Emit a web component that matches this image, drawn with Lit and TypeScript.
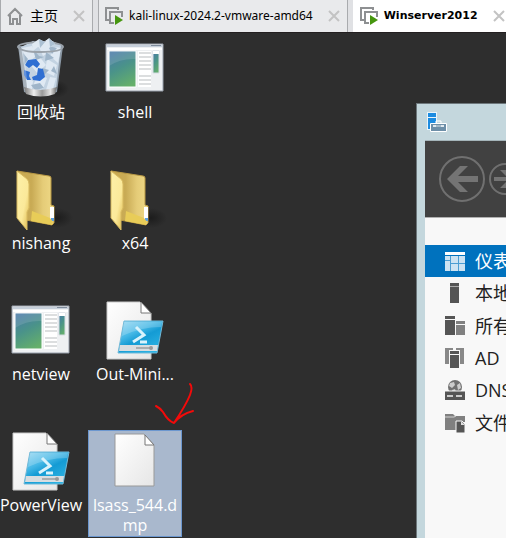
import { LitElement, html, svg, css } from "lit";
import { customElement, property } from "lit/decorators.js";
import { classMap } from "lit/directives/class-map.js";

const defs = svg`
  <defs>
    <linearGradient id="sheet" x1="0" y1="0" x2="1" y2="1">
      <stop offset="0" stop-color="#fff"/><stop offset="1" stop-color="#e6e6e6"/>
    </linearGradient>
    <linearGradient id="pane" x1="0.3" y1="0" x2="0.7" y2="1">
      <stop offset="0" stop-color="#4a7da6"/><stop offset="0.45" stop-color="#4a9389"/><stop offset="1" stop-color="#66b06a"/>
    </linearGradient>
    <linearGradient id="ps" x1="0" y1="0" x2="0.7" y2="1">
      <stop offset="0" stop-color="#9bd9f3"/><stop offset="0.4" stop-color="#45b8e6"/><stop offset="0.6" stop-color="#149bd4"/><stop offset="1" stop-color="#2cb2e2"/>
    </linearGradient>
    <linearGradient id="flap" x1="0" y1="0" x2="1" y2="1">
      <stop offset="0" stop-color="#fdf0a8"/><stop offset="0.6" stop-color="#fbe99a"/><stop offset="1" stop-color="#dcb84b"/>
    </linearGradient>
    <linearGradient id="back" x1="0" y1="0" x2="1" y2="0">
      <stop offset="0" stop-color="#c8a850"/><stop offset="0.4" stop-color="#c9ab55"/><stop offset="0.7" stop-color="#e5cc78"/><stop offset="1" stop-color="#efd986"/>
    </linearGradient>
    <linearGradient id="metal" x1="0" y1="0" x2="1" y2="0">
      <stop offset="0" stop-color="#777"/><stop offset="0.3" stop-color="#eee"/><stop offset="0.55" stop-color="#999"/><stop offset="0.8" stop-color="#e4e4e4"/><stop offset="1" stop-color="#666"/>
    </linearGradient>
    <radialGradient id="shade"><stop offset="0" stop-color="#1c1c1c"/><stop offset="1" stop-color="#1c1c1c" stop-opacity="0"/></radialGradient>
  </defs>`;

const art: Record<string, unknown> = {
  bin: svg`
    <ellipse cx="47" cy="51" rx="13" ry="9" fill="url(#shade)"/>
    <path d="M9 8h45l-6 46q-17 7-33 0z" fill="#8b98a5"/>
    <path d="M12 9l12-6 8 3 7-5 13 6-3 26-2 18-14 2-14-2z" fill="#c3d3e2"/>
    <path d="M13 10l10-2 5 9-9 8zM29 7l9-5 5 11-9 5zM46 9l6 1-3 15-8-7zM20 25l10-7 7 9-9 8zM38 21l10 6-3 11-9-4zM29 36l9 4-4 11-10-3zM41 39l6 1-3 11-7 1zM17 39l7 4-1 8-5-1z" fill="#dfe9f3"/>
    <path d="M24 11l6 7 5 1-8 3zM37 14l8 6-9 3zM33 30l7 2-5 5zM45 28l3 8-6-3zM22 47l9-2 4 5-9 2zM14 15l5 6-4 6zM39 8l4 8 5-6z" fill="#9fb5c9"/>
    <path d="M19 22l8-1 4 5-3 4-4-3-4 3-4-3zM29 30l5 1 2 8-5 4-7-1-1-3 5-2zM15 32l6 2-1 4 2 4h-4l-3-5z" fill="#2f6fd2"/>
    <path d="M10 10l5 42 4 1-4-42z" fill="#fff" opacity=".25"/>
    <path d="M15 49q16 6 33 0l-2 7q-14 5-29 0z" fill="url(#metal)"/>
    <path d="M9 9q0-4 23-5 22 1 22 5-2 5-22 5T9 9z" fill="none" stroke="#9aa2aa" stroke-width="2"/>
    <path d="M23 6l7-5 6 3 4-4 6 6-9 6-8-3-5 4z" fill="#dfe9f2"/>
    <path d="M30 1l1 9 5-6zM40 0l1 9 5-3z" fill="#abc0d2"/>`,
  app: svg`
    <path d="M3 6h57v47H3z" fill="#eef0f2" stroke="#98a0ac"/>
    <path d="M4 7h55v2H4z" fill="#c6cfda"/><path d="M48 7h10v1H48z" fill="#7f8c9c"/>
    <path d="M4 10h55v2H4z" fill="#fff"/>
    <path d="M6 13h27v36H6z" fill="url(#pane)" stroke="#fff"/>
    <path d="M6 28q12-8 27-7v-7H6z" fill="#fff" opacity=".12"/>
    <path d="M35 13h13v36H35z" fill="#fff"/>
    <path d="M36 15h12m-12 4h12m-12 4h12m-12 4h12m-12 4h12m-12 7h12m-12 4h12m-12 4h12" stroke="#dcdedf" stroke-width="2"/>
    <path d="M50 13h6v22h-6z" fill="url(#pane)" stroke="#d5dbe4"/>
    <path d="M50 13h6v3h-6z" fill="#fff"/>`,
  folder: svg`
    <ellipse cx="48" cy="49" rx="16" ry="10" fill="url(#shade)"/>
    <path d="M8 2l32 5q2 0 2 2v27l3 1v17l-2 2-26-5z" fill="url(#back)" stroke="#b79743"/>
    <path d="M41 38h4v13h-4z" fill="#fff"/><path d="M42 49h3v3h-3z" fill="#5c9fdf"/>
    <path d="M23 42l18 7 3 4-1 3-21-4z" fill="#e8cc58"/>
    <path d="M8 2l10 8q2 2 2 5v24l-2 4v18L8 49V2z" fill="url(#flap)" stroke="#d8ba60"/>`,
  script: svg`
    <path d="M4 2h33l11 11v46H4z" fill="url(#sheet)" stroke="#c9c9c9"/>
    <path d="M38 2v11h10z" fill="#fff" stroke="#777"/>
    <path d="M21 21h39l-6 32H15z" fill="url(#ps)" stroke="#71b9d8"/>
    <path d="M21 22h38l-1 5q-20 0-39 9z" fill="#fff" opacity=".2"/>
    <path d="M17 45h38l-1 6H16z" fill="#d8dde0"/><path d="M33 48h16" stroke="#a9aeb1" stroke-width="2"/><circle cx="48" cy="48" r="2" fill="#999"/>
    <path d="M33 27l8 8-11 7m7 0h7" fill="none" stroke="#d9f3fc" stroke-width="3"/>`,
  file: svg`
    <path d="M12 3h29l10 11v41H12z" fill="url(#sheet)" stroke="#999"/>
    <path d="M42 4v10h9z" fill="#fff" stroke="#777"/>`,
};

const navArt: Record<string, unknown> = {
  dash: svg`<path d="M0 1h20v3H0z" fill="#fff"/><path d="M0 5h20v15H0z" fill="#cce3f2"/><path d="M5.500 5v15M13.500 5v15M5 12.500h15M0 9.500h5" stroke="#4b9dd2"/>`,
  local: svg`<path d="M5 0h9v3H5zM5 4h9v16H5z" fill="#555"/><path d="M5 3h9v1H5z" fill="#aaa"/>`,
  all: svg`<path d="M0 0h10v3H0zM0 4h10v15H0z" fill="#555"/><path d="M11 5h9v3h-9zM11 9h9v10h-9z" fill="#808080"/>`,
  ad: svg`<path d="M0 0h8v2H5v14H0zM11 0h8v16h-5V2h-3z" fill="#888"/><path d="M4 2h11v18H4z" fill="#f8f8f8"/><path d="M5 3h9v3H5zM5 7h9v13H5z" fill="#555"/>`,
  dns: svg`<circle cx="10" cy="7" r="7" fill="#707070"/><path d="M5 3l4-1 1 3-3 3-3-2zM12 5l3-2 1 5-3 2zM7 10l3-1 1 3-3 1z" fill="#ccc"/><path d="M0 11h20v9H0z" fill="#555"/><path d="M2 15h6v2H2zM11 15h6v2h-6z" fill="#ccc"/><path d="M0 11h20" stroke="#f8f8f8"/>`,
  files: svg`<path d="M0 1h8l2 2h10v6h-7v8H0z" fill="#808080"/><path d="M0 4h9l2-1" stroke="#d0d0d0" fill="none"/><path d="M11 8h6l3 3v9h-9z" fill="#555" stroke="#f8f8f8"/><path d="M16 8v4h4z" fill="#ddd"/>`,
};

@customElement("vm-tab")
export class VmTab extends LitElement {
  @property() label = "";
  @property() kind = "vm";
  @property({ type: Boolean }) active = false;

  static styles = css`
    :host { display: flex; flex: none; }
    .tab { display: flex; align-items: center; padding: 0 7px 0 6px; border: 0 solid #a9abae; border-width: 0 1px; background: #e9eaec; }
    .active { background: #fff; border-color: #fff; }
    button { display: flex; align-items: center; height: 30px; padding: 0; border: 0; background: none; color: #000; white-space: nowrap; font: 12px/20px "Noto Sans", "Noto Sans CJK SC", sans-serif; }
    .open { gap: 6px; }
    .home { gap: 7px; font-size: 14px; }
    .active .open { font: 700 11px/20px "DejaVu Sans", sans-serif; }
    .close { margin-left: 15px; }
    svg { display: block; flex: none; }
  `;

  render() {
    const home = this.kind === "home";
    return html`<div class=${classMap({ tab: true, active: this.active })}>
      <button class=${home ? "home" : "open"} role="tab" aria-selected=${this.active}>
        ${home
          ? html`<svg width="16" height="18" viewBox="0 0 16 18"><path d="M1 9l7-7 7 7M3 8v9h3v-5h4v5h3V8" fill="none" stroke="#8e9092" stroke-width="2"/></svg>`
          : html`<svg width="18" height="18" viewBox="0 0 18 18"><path d="M4 13H1V1h12v2M9 16H5V5h12v5" fill="none" stroke="#8e9092" stroke-width="2"/><path d="M10 8l8 5-8 5z" fill="#46960f"/></svg>`}
        ${this.label}
      </button>
      <button class="close" aria-label="Close">
        <svg width="12" height="12" viewBox="0 0 12 12"><path d="M1 1l10 10M11 1L1 11" stroke="#c3c3c3" stroke-width="2"/></svg>
      </button>
    </div>`;
  }
}

@customElement("desktop-icon")
export class DesktopIcon extends LitElement {
  @property() label = "";
  @property() kind = "file";
  @property({ type: Boolean }) selected = false;

  static styles = css`
    :host { display: block; }
    button { display: flex; flex-direction: column; align-items: center; width: 100%; padding: 0 3px 1px; border: 1px solid transparent; background: none; color: #fff; font: 16px/20px "Open Sans", "Noto Sans CJK SC", sans-serif; }
    .selected { background: #a9b8cd; border-color: #6c97cf; }
    svg { display: block; margin-bottom: 2px; }
    .label { width: 100%; word-break: break-all; text-align: center; }
  `;

  render() {
    return html`<button class=${classMap({ selected: this.selected })}>
      <svg width="64" height="62" viewBox="0 0 64 62">${defs}${art[this.kind]}</svg>
      <span class="label">${this.label}</span>
    </button>`;
  }
}

@customElement("server-manager")
export class ServerManager extends LitElement {
  static styles = css`
    :host { display: flex; flex-direction: column; box-sizing: border-box; padding-left: 8px; border: 1px solid #6d777b; border-right: 0; border-bottom: 0; background: #c4d7dd; overflow: hidden; }
    .title { display: flex; align-items: center; height: 36px; padding-left: 2px; border-bottom: 1px solid #a5b5ba; }
    .body { flex: 1; background: #f8f8f8; }
    .head { display: flex; align-items: center; gap: 2px; height: 76px; padding-left: 13px; background: #414141; border-bottom: 1px solid #b0b0b0; }
    .head button { display: flex; flex: none; padding: 0; border: 0; background: none; }
    nav { display: grid; grid-auto-rows: 1fr; height: 194px; margin-top: 27px; }
    a { display: flex; align-items: center; gap: 10px; padding-left: 20px; color: #222; text-decoration: none; white-space: nowrap; font: 18px/24px "Open Sans", "Noto Sans CJK SC", sans-serif; }
    .current { background: #0072be; color: #fff; }
    svg { flex: none; display: block; }
  `;

  items = [
    ["dash", "仪表"],
    ["local", "本地"],
    ["all", "所有"],
    ["ad", "AD"],
    ["dns", "DNS"],
    ["files", "文件"],
  ];

  render() {
    return html`
      <div class="title">
        <svg width="20" height="20" viewBox="0 0 20 20">
          <path d="M0 0h10v18H0z" fill="#e8f4fb"/><path d="M1 1h8v4H1zM1 6h8v11H1z" fill="#1b8be0"/>
          <path d="M9 11V9h5v2" fill="none" stroke="#fff"/><path d="M3.500 11.500h16v8h-16z" fill="#6e8fa8" stroke="#fff"/>
          <path d="M6 13h11v2H6z" fill="#dfe8ee"/><path d="M9 13h5v2H9z" fill="#a6bac8"/>
        </svg>
      </div>
      <div class="body">
        <div class="head">
          <button aria-label="Back">
            <svg width="48" height="48" viewBox="0 0 48 48"><circle cx="24" cy="24" r="22" fill="none" stroke="#707070" stroke-width="2"/><path d="M9 24l13-13h8L20 21h20v6H20l10 10h-8z" fill="#747474"/></svg>
          </button>
          <button aria-label="Forward">
            <svg width="34" height="34" viewBox="0 0 34 34"><circle cx="17" cy="17" r="15" fill="none" stroke="#707070" stroke-width="2"/><path d="M27 17l-9 9h-6l7-7H6v-4h13l-7-7h6z" fill="#747474"/></svg>
          </button>
        </div>
        <nav>
          ${this.items.map(([icon, label], i) => html`<a href="#${icon}" class=${classMap({ current: i === 0 })}>
            <svg width="20" height="20" viewBox="0 0 20 20">${navArt[icon]}</svg>${label}
          </a>`)}
        </nav>
      </div>`;
  }
}

@customElement("app-root")
export class AppRoot extends LitElement {
  static styles = css`
    :host { display: flex; flex-direction: column; min-height: 100vh; overflow: hidden; background: #2e2e2e; }
    .tabs { display: flex; gap: 5px; height: 32px; background: #e0e1e4; border-bottom: 1px solid #231f20; overflow: hidden; }
    .desktop { position: relative; flex: 1; overflow: hidden; }
    .icons { display: grid; grid-template-columns: 94px 94px; grid-auto-rows: 107px; gap: 24px 0; margin: 4px 0 0 -6px; }
    .window { position: absolute; left: 416px; right: 0; top: 70px; bottom: 0; }
    .mark { position: absolute; left: 150px; top: 347px; }
  `;

  icons = [
    ["bin", "回收站"],
    ["app", "shell"],
    ["folder", "nishang"],
    ["folder", "x64"],
    ["app", "netview"],
    ["script", "Out-Mini..."],
    ["script", "PowerView"],
    ["file", "lsass_544.dmp"],
  ];

  render() {
    return html`
      <div class="tabs" role="tablist">
        <vm-tab kind="home" label="主页"></vm-tab>
        <vm-tab label="kali-linux-2024.2-vmware-amd64"></vm-tab>
        <vm-tab label="Winserver2012" active></vm-tab>
      </div>
      <main class="desktop">
        <div class="icons">
          ${this.icons.map(([kind, label]) => html`<desktop-icon kind=${kind} label=${label} ?selected=${kind === "file"}></desktop-icon>`)}
        </div>
        <server-manager class="window"></server-manager>
        <svg class="mark" width="48" height="48" viewBox="0 0 48 48">
          <path d="M40 4q3 3 0 11-4 10-16 28Q18 41 13 32q-3-4-7-6M24 43q7-9 19-12" fill="none" stroke="#f30a0a" stroke-width="2" stroke-linecap="round" stroke-linejoin="round"/>
        </svg>
      </main>`;
  }
}
